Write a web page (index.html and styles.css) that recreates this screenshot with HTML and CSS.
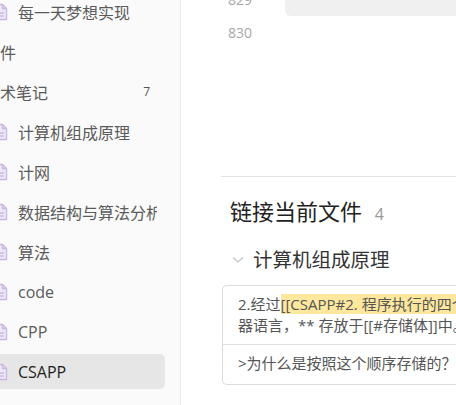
FILE: index.html
```html
<!DOCTYPE html>
<html>
<head>
<meta charset="utf-8">
<link rel="stylesheet" href="styles.css">
</head>
<body>
<div class="app">
  <aside class="sidebar">
    <ul class="tree">
      <li class="item file"><svg class="ficon" viewBox="0 0 14 18"><path d="M1.5 1.5h7l4 4v11h-11z" fill="#efe9f7" stroke="#c9b9e2" stroke-width="1.4" stroke-linejoin="round"/><path d="M8.5 1.5v4h4" fill="none" stroke="#c9b9e2" stroke-width="1.4"/><path d="M4 10h6M4 13h6" stroke="#c9b9e2" stroke-width="1.4"/></svg><span>每一天梦想实现</span></li>
      <li class="item folder"><span>文件</span></li>
      <li class="item folder"><span>技术笔记</span><em class="count">7</em></li>
      <li class="item file"><svg class="ficon" viewBox="0 0 14 18"><path d="M1.5 1.5h7l4 4v11h-11z" fill="#efe9f7" stroke="#c9b9e2" stroke-width="1.4" stroke-linejoin="round"/><path d="M8.5 1.5v4h4" fill="none" stroke="#c9b9e2" stroke-width="1.4"/><path d="M4 10h6M4 13h6" stroke="#c9b9e2" stroke-width="1.4"/></svg><span>计算机组成原理</span></li>
      <li class="item file"><svg class="ficon" viewBox="0 0 14 18"><path d="M1.5 1.5h7l4 4v11h-11z" fill="#efe9f7" stroke="#c9b9e2" stroke-width="1.4" stroke-linejoin="round"/><path d="M8.5 1.5v4h4" fill="none" stroke="#c9b9e2" stroke-width="1.4"/><path d="M4 10h6M4 13h6" stroke="#c9b9e2" stroke-width="1.4"/></svg><span>计网</span></li>
      <li class="item file"><svg class="ficon" viewBox="0 0 14 18"><path d="M1.5 1.5h7l4 4v11h-11z" fill="#efe9f7" stroke="#c9b9e2" stroke-width="1.4" stroke-linejoin="round"/><path d="M8.5 1.5v4h4" fill="none" stroke="#c9b9e2" stroke-width="1.4"/><path d="M4 10h6M4 13h6" stroke="#c9b9e2" stroke-width="1.4"/></svg><span>数据结构与算法分析</span></li>
      <li class="item file"><svg class="ficon" viewBox="0 0 14 18"><path d="M1.5 1.5h7l4 4v11h-11z" fill="#efe9f7" stroke="#c9b9e2" stroke-width="1.4" stroke-linejoin="round"/><path d="M8.5 1.5v4h4" fill="none" stroke="#c9b9e2" stroke-width="1.4"/><path d="M4 10h6M4 13h6" stroke="#c9b9e2" stroke-width="1.4"/></svg><span>算法</span></li>
      <li class="item file"><svg class="ficon" viewBox="0 0 14 18"><path d="M1.5 1.5h7l4 4v11h-11z" fill="#efe9f7" stroke="#c9b9e2" stroke-width="1.4" stroke-linejoin="round"/><path d="M8.5 1.5v4h4" fill="none" stroke="#c9b9e2" stroke-width="1.4"/><path d="M4 10h6M4 13h6" stroke="#c9b9e2" stroke-width="1.4"/></svg><span>code</span></li>
      <li class="item file"><svg class="ficon" viewBox="0 0 14 18"><path d="M1.5 1.5h7l4 4v11h-11z" fill="#efe9f7" stroke="#c9b9e2" stroke-width="1.4" stroke-linejoin="round"/><path d="M8.5 1.5v4h4" fill="none" stroke="#c9b9e2" stroke-width="1.4"/><path d="M4 10h6M4 13h6" stroke="#c9b9e2" stroke-width="1.4"/></svg><span>CPP</span></li>
      <li class="item file active"><svg class="ficon" viewBox="0 0 14 18"><path d="M1.5 1.5h7l4 4v11h-11z" fill="#efe9f7" stroke="#c9b9e2" stroke-width="1.4" stroke-linejoin="round"/><path d="M8.5 1.5v4h4" fill="none" stroke="#c9b9e2" stroke-width="1.4"/><path d="M4 10h6M4 13h6" stroke="#c9b9e2" stroke-width="1.4"/></svg><span>CSAPP</span></li>
    </ul>
  </aside>
  <main class="main">
    <div class="editor">
      <div class="line"><span class="ln">829</span><div class="code"></div></div>
      <div class="line"><span class="ln">830</span><div class="blank"></div></div>
    </div>
    <section class="backlinks">
      <h2 class="bl-title">链接当前文件 <span class="bl-count">4</span></h2>
      <div class="group">
        <div class="group-head"><svg class="chev" viewBox="0 0 12 8"><path d="M1 1.5l5 4.5 5-4.5" fill="none" stroke="#c4c4c4" stroke-width="1.3"/></svg><span>计算机组成原理</span></div>
        <div class="match">
          <div class="match-row"><p>2.经过<mark>[[CSAPP#2. 程序执行的四个阶段]]</mark>转为机<br>器语言，** 存放于[[#存储体]]中。</p></div>
          <div class="match-row"><p>&gt;为什么是按照这个顺序存储的？</p></div>
        </div>
      </div>
    </section>
  </main>
</div>
</body>
</html>
```
FILE: styles.css
```css
html, body {
  margin: 0;
  padding: 0;
  background: #ffffff;
}
body {
  width: 456px;
  height: 405px;
  overflow: hidden;
  font-family: "Open Sans", "Noto Sans CJK SC", sans-serif;
}
.app {
  display: flex;
  height: 405px;
  overflow: hidden;
}
.sidebar {
  width: 180px;
  flex: 0 0 180px;
  background: #fafafa;
  border-right: 1px solid #e8e8ee;
  overflow: hidden;
}
.tree {
  list-style: none;
  margin: -6px 0 0 -16px;
  padding: 0;
  display: flex;
  flex-direction: column;
  gap: 5px;
}
.item {
  display: flex;
  align-items: center;
  height: 35px;
  font-size: 16px;
  color: #5a5a5a;
  white-space: nowrap;
  width: 181px;
  box-sizing: border-box;
  border-radius: 5px;
}
.item.file {
  padding-left: 10px;
  gap: 10px;
}
.ficon {
  width: 14px;
  height: 18px;
  flex: 0 0 14px;
}
.item.file span {
  overflow: hidden;
  width: 139px;
}
.item.active {
  background: #e6e6e6;
  color: #1e1e1e;
}
.count {
  font-style: normal;
  font-size: 12px;
  color: #555;
  margin-left: auto;
  margin-right: 15px;
  margin-top: -1px;
}
.main {
  flex: 1;
  padding-left: 40px;
  overflow: hidden;
}
.editor {
  margin-top: -17px;
  height: 194px;
  box-sizing: border-box;
  border-bottom: 1px solid #e3e3e3;
}
.line {
  display: flex;
  height: 33px;
  align-items: stretch;
}
.ln {
  width: 31px;
  text-align: right;
  font-size: 14px;
  line-height: 33px;
  color: #a8a8a8;
  font-family: "Open Sans", sans-serif;
}
.code {
  flex: 1;
  margin-left: 33px;
  background: #f0f0f0;
  border-radius: 0 0 0 6px;
}
.backlinks {
  padding-left: 9px;
}
.bl-title {
  margin: 20px 0 0;
  font-weight: normal;
  font-size: 22px;
  line-height: 28px;
  color: #222;
}
.bl-count {
  font-size: 16px;
  color: #999;
  margin-left: 7px;
}
.group-head {
  display: flex;
  align-items: center;
  gap: 9px;
  margin-top: 20px;
  font-size: 19.5px;
  line-height: 24px;
  color: #333;
}
.chev {
  width: 12px;
  height: 8px;
  margin-left: 2px;
}
.match {
  margin: 13px 0 0 -8px;
  border: 1px solid #dcdcdc;
  border-right: none;
  border-radius: 5px 0 0 5px;
  width: 260px;
}
.match-row {
  padding: 8px 0 8px 15px;
  border-bottom: 1px solid #e0e0e0;
}
.match-row:last-child {
  border-bottom: none;
  padding-bottom: 10px;
}
.match-row p {
  margin: 0;
  font-size: 15px;
  line-height: 21px;
  color: #555;
  white-space: nowrap;
}
mark {
  background: #fde89d;
  color: #555;
}
```
